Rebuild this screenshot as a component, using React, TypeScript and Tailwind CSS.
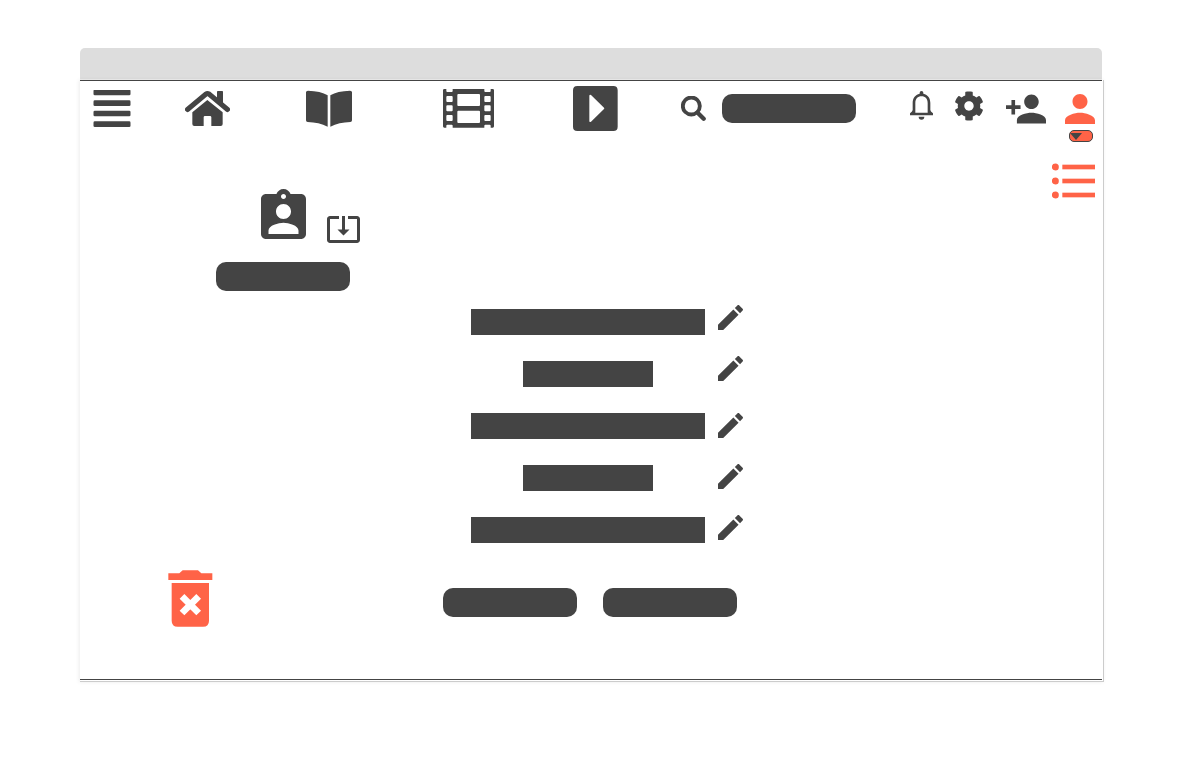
import React from "react";
import { FaCog } from "react-icons/fa";

const pill = "h-[29px] w-[134px] rounded-[10px] bg-[#444]";

const Icon = ({ box, className, children }: { box: string; className: string; children: React.ReactNode }) => (
  <svg viewBox={box} className={`block shrink-0 fill-current ${className}`} aria-hidden="true">
    {children}
  </svg>
);

const MenuIcon = () => (
  <Icon box="69 149 114 114" className="h-[38px] w-[38px]">
    {[148, 180, 211, 243].map((y) => (
      <rect key={y} x="70.500" y={y} width="111" height="17" rx="4" />
    ))}
  </Icon>
);

const HomeIcon = () => (
  <Icon box="345 150 135 111" className="h-[37px] w-[45px]">
    <path d="M441 155q0-2 2-2h14q2 0 2 2v37l-18-15z" />
    <path
      d="M352.500 208.500L408 162q4-3 9 0L472.500 208.500"
      fill="none"
      stroke="currentColor"
      strokeWidth="15"
      strokeLinejoin="round"
      strokeLinecap="round"
    />
    <path d="M412 180L458 217V252q0 6-6 6H424V232q0-4-4-4H405q-4 0-4 4V258H373q-6 0-6-6V217z" />
  </Icon>
);

const BookIcon = () => (
  <Icon box="708 148 138 114" className="h-[38px] w-[46px]">
    <path d="M708 155q0-5 6-5Q752 151 773 164V258Q747 245 713 244q-5 0-5-5zM846 155q0-5-6-5Q802 151 781 164V258Q807 245 841 244q5 0 5-5z" />
  </Icon>
);

const FilmIcon = () => (
  <Icon box="69 39 153 117" className="h-[39px] w-[51px]">
    <path
      fillRule="evenodd"
      d="M73 39h6v6q0 3 3 3h13q3 0 3-3v-6h95v6q0 3 3 3h13q3 0 3-3v-6h6q4 0 4 4v108q0 4-4 4h-6v-6q0-3-3-3h-13q-3 0-3 3v6H98v-6q0-3-3-3H82q-3 0-3 3v6h-6q-4 0-4-4V43q0-4 4-4z
      M115 54h62q3 0 3 3v30q0 3-3 3h-62q-3 0-3-3V57q0-3 3-3z
      M115 104h62q3 0 3 3v31q0 3-3 3h-62q-3 0-3-3v-31q0-3 3-3z
      M82 60h13q3 0 3 3v12q0 3-3 3H82q-3 0-3-3V63q0-3 3-3z
      M82 88h13q3 0 3 3v12q0 3-3 3H82q-3 0-3-3V91q0-3 3-3z
      M82 117h13q3 0 3 3v12q0 3-3 3H82q-3 0-3-3v-12q0-3 3-3z
      M196 60h13q3 0 3 3v12q0 3-3 3h-13q-3 0-3-3V63q0-3 3-3z
      M196 88h13q3 0 3 3v12q0 3-3 3h-13q-3 0-3-3V91q0-3 3-3z
      M196 117h13q3 0 3 3v12q0 3-3 3h-13q-3 0-3-3v-12q0-3 3-3z"
    />
  </Icon>
);

const PlayIcon = () => (
  <Icon box="460 30 135 135" className="h-[45px] w-[45px]">
    <path
      fillRule="evenodd"
      d="M473 30h108q13 0 13 13v109q0 13-13 13H473q-13 0-13-13V43q0-13 13-13zM509 60v75q0 5 5 2l39-38q2-2 0-4L514 57q-5-2-5 3z"
    />
  </Icon>
);

const SearchIcon = () => (
  <Icon box="63 60 75 75" className="h-[25px] w-[25px]">
    <circle cx="94" cy="90" r="25.5" fill="none" stroke="currentColor" strokeWidth="11.500" />
    <path d="M113 110L131 128" stroke="currentColor" strokeWidth="13" strokeLinecap="round" />
  </Icon>
);

const BellIcon = () => (
  <Icon box="60 45 69 87" className="h-[29px] w-[23px]">
    <path
      fillRule="evenodd"
      d="M89 53V50q0-5 5.500-5t5.500 5v3C114 56 121 67 121 81v21q0 4 8 10v6H60v-6q8-6 8-10V81C68 67 75 56 89 53zM76 110H113V82C113 68 106 61 94.500 61S76 68 76 82z"
    />
    <path d="M86 122h17q0 9-8.500 9T86 122z" />
  </Icon>
);

const AddPersonIcon = () => (
  <Icon box="1 4 22 16" className="h-[30px] w-[40px]">
    <path d="M15 12c2.210 0 4-1.790 4-4s-1.790-4-4-4-4 1.790-4 4 1.790 4 4 4zm-9-2V7H4v3H1v2h3v3h2v-3h3v-2H6zm9 4c-2.670 0-8 1.340-8 4v2h16v-2c0-2.660-5.330-4-8-4z" />
  </Icon>
);

const PersonIcon = () => (
  <Icon box="4 4 16 16" className="h-[30px] w-[30px]">
    <path d="M12 12c2.210 0 4-1.790 4-4s-1.790-4-4-4-4 1.790-4 4 1.790 4 4 4zm0 2c-2.670 0-8 1.340-8 4v2h16v-2c0-2.660-5.330-4-8-4z" />
  </Icon>
);

const ListIcon = () => (
  <Icon box="486 261 129 108" className="h-9 w-[43px]">
    {[273, 315, 357].map((y) => (
      <g key={y}>
        <circle cx="496" cy={y} r="10.5" />
        <rect x="517" y={y - 7} width="98" height="14" />
      </g>
    ))}
  </Icon>
);

const BadgeIcon = () => (
  <Icon box="3 1 18 20" className="h-[50px] w-[45px]">
    <path d="M19 3h-4.180C14.400 1.840 13.300 1 12 1c-1.300 0-2.400.84-2.820 2H5c-1.100 0-2 .9-2 2v14c0 1.100.9 2 2 2h14c1.100 0 2-.9 2-2V5c0-1.100-.9-2-2-2zm-7 0c.55 0 1 .45 1 1s-.45 1-1 1-1-.45-1-1 .45-1 1-1zm0 4c1.660 0 3 1.340 3 3s-1.340 3-3 3-3-1.340-3-3 1.340-3 3-3zm6 12H6v-1.400c0-2 4-3.100 6-3.100s6 1.100 6 3.100V19z" />
  </Icon>
);

const DownloadIcon = () => (
  <Icon box="1 3.5 22 18" className="h-[27px] w-[33px]">
    <path d="M12 16.500l4-4h-3v-9h-2v9H8l4 4zm9-13h-6v1.990h6v14.030H3V5.490h6V3.500H3c-1.100 0-2 .9-2 2v14c0 1.100.9 2 2 2h18c1.100 0 2-.9 2-2v-14c0-1.100-.9-2-2-2z" />
  </Icon>
);

const PencilIcon = () => (
  <Icon box="3 3 18 18" className="h-[25px] w-[25px]">
    <path d="M3 17.250V21h3.750L17.810 9.940l-3.750-3.750L3 17.250zM20.710 7.040c.39-.39.39-1.020 0-1.410l-2.340-2.340c-.39-.39-1.020-.39-1.410 0l-1.830 1.830 3.750 3.750 1.830-1.830z" />
  </Icon>
);

const TrashIcon = () => (
  <Icon box="55 30 135 171" className="h-[57px] w-[45px]">
    <path d="M56 40H89L99 31H145L155 40H188V60H56zM66 69H178V182q0 18-18 18H84q-18 0-18-18z" />
    <path d="M97 109L147 159M147 109L97 159" stroke="#fff" strokeWidth="20" />
  </Icon>
);

const fields = [
  { name: "Name", wide: true },
  { name: "Age", wide: false },
  { name: "Email", wide: true },
  { name: "Phone", wide: false },
  { name: "Address", wide: true },
];

const EditButtons = ({ names }: { names: string[] }) => (
  <div className="flex flex-col gap-[26px]">
    {names.map((name) => (
      <button key={name} type="button" aria-label={`Edit ${name}`}>
        <PencilIcon />
      </button>
    ))}
  </div>
);

export default function App() {
  return (
    <div className="min-h-screen bg-white px-20 pt-12 font-['Liberation_Sans',sans-serif] text-[#444]">
      <div className="h-8 rounded-t-[5px] border-b border-[#eee] bg-[#ddd]" />
      <div className="-mr-0.5 border-r border-b border-[#ccc] pr-px pb-px shadow-[-1px_0_4px_rgba(0,0,0,0.08)]">
        <div className="border-y border-[#444] bg-white">
          <header className="flex items-center pt-[5px] pr-[7px] pl-[13px]">
            <nav className="flex items-center" aria-label="Main">
              <a href="#menu" aria-label="Menu"><MenuIcon /></a>
              <a href="#home" aria-label="Home" className="ml-[54px]"><HomeIcon /></a>
              <a href="#library" aria-label="Library" className="ml-[76px]"><BookIcon /></a>
              <a href="#films" aria-label="Films" className="ml-[91px]"><FilmIcon /></a>
              <a href="#play" aria-label="Play" className="ml-[79px]"><PlayIcon /></a>
            </nav>
            <form role="search" className="ml-[63px] flex items-center gap-4">
              <button type="button" aria-label="Search"><SearchIcon /></button>
              <input type="search" aria-label="Search text" className={`${pill} px-3 text-sm text-white`} />
            </form>
            <div className="ml-auto flex items-start pb-0.5">
              <div className="flex items-center gap-[21px] pb-1">
                <button type="button" aria-label="Notifications"><BellIcon /></button>
                <button type="button" aria-label="Settings"><FaCog className="block h-[30px] w-[30px]" /></button>
              </div>
              <div className="ml-[22px] flex gap-[19px] pt-[3px]">
                <button type="button" aria-label="Add person"><AddPersonIcon /></button>
                <div className="relative">
                  <button type="button" aria-label="Profile" className="block text-[#ff6347]"><PersonIcon /></button>
                  <button
                    type="button"
                    aria-label="Profile menu"
                    className="absolute top-full left-1 mt-1.5 flex h-3 w-6 items-end rounded-[5px] border border-[#444] bg-[#ff6347] pb-px"
                  >
                    <Icon box="0 0 12 7" className="h-[7px] w-3"><path d="M0 0h12L6 7z" /></Icon>
                  </button>
                </div>
              </div>
            </div>
          </header>

          <main className="pb-[52px]">
            <div className="flex items-start justify-between pr-[7px] pl-[136px]">
              <section aria-label="Profile" className="pt-[58px]">
                <div className="flex items-end gap-[21px] pl-[45px]">
                  <div className="pb-1"><BadgeIcon /></div>
                  <button type="button" aria-label="Download"><DownloadIcon /></button>
                </div>
                <button type="button" aria-label="Profile details" className={`${pill} mt-[19px] block`} />
              </section>
              <button type="button" aria-label="Options" className="mt-8 text-[#ff6347]"><ListIcon /></button>
            </div>

            <form className="mt-3.5 flex items-start gap-[13px] pl-[391px]">
              <div className="flex flex-col items-center gap-[26px] pt-1">
                {fields.map(({ name, wide }) => (
                  <input
                    key={name}
                    type="text"
                    aria-label={name}
                    className={`block h-[26px] bg-[#444] px-2 text-sm text-white ${wide ? "w-[234px]" : "w-[130px]"}`}
                  />
                ))}
              </div>
              <div className="flex flex-col gap-8">
                <EditButtons names={["Name", "Age"]} />
                <EditButtons names={["Email", "Phone", "Address"]} />
              </div>
            </form>

            <div className="mt-[27px] flex items-start pl-[88px]">
              <button type="button" aria-label="Delete profile" className="text-[#ff6347]"><TrashIcon /></button>
              <div className="ml-[230px] flex gap-[26px] pt-[18px]">
                <button type="button" aria-label="Save" className={pill} />
                <button type="button" aria-label="Cancel" className={pill} />
              </div>
            </div>
          </main>
        </div>
      </div>
    </div>
  );
}
